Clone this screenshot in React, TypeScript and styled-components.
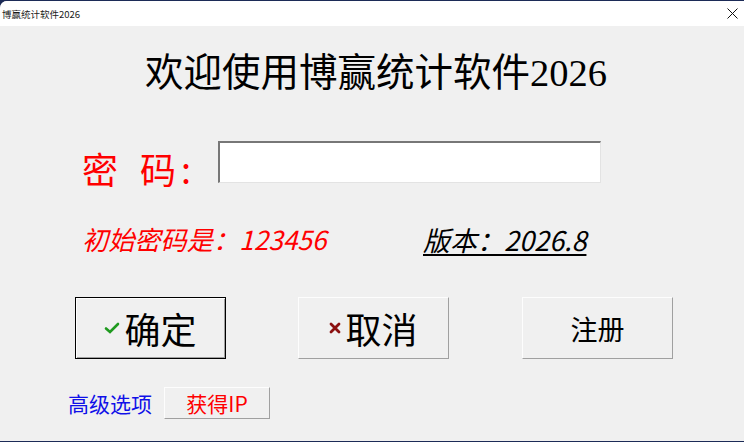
import styled, { createGlobalStyle } from "styled-components";

const GlobalStyle = createGlobalStyle`
  html, body {
    margin: 0;
    padding: 0;
    background: #1c2b57;
  }
  * {
    box-sizing: border-box;
  }
`;

const CN = `"Noto Sans CJK SC", "Noto Sans", sans-serif`;

const Window = styled.div`
  width: 744px;
  height: 440px;
  margin-top: 1px;
  border-radius: 7px 0 0 0;
  overflow: hidden;
  background: #f0f0f0;
  display: flex;
  flex-direction: column;
`;

const TitleBar = styled.div`
  height: 25px;
  background: #ffffff;
  display: flex;
  align-items: center;
  justify-content: space-between;
  padding: 0 4px 0 2px;
`;

const TitleText = styled.span`
  font-family: ${CN};
  font-size: 9.5px;
  color: #1a1a1a;
`;

const CloseBox = styled.div`
  width: 16px;
  height: 16px;
  display: flex;
  align-items: center;
  justify-content: center;
`;

const Body = styled.div`
  flex: 1;
  display: flex;
  flex-direction: column;
`;

const Heading = styled.h1`
  margin: 22px 0 0;
  height: 50px;
  line-height: 50px;
  text-align: center;
  font-family: "Liberation Serif", "Noto Sans CJK SC", serif;
  font-size: 38.5px;
  font-weight: 400;
  color: #000;
  padding-left: 8px;
`;

const PasswordRow = styled.div`
  margin-top: 43px;
  display: flex;
  align-items: center;
  padding-left: 82px;
  height: 42px;
`;

const Label = styled.span`
  font-family: ${CN};
  font-size: 36px;
  color: #ff0000;
  width: 136px;
  line-height: 42px;
  padding-top: 11px;
  display: flex;
`;

const LabelChar = styled.span<{ $gap: number }>`
  margin-right: ${(p) => p.$gap}px;
`;

const Input = styled.input`
  width: 383px;
  height: 42px;
  background: #ffffff;
  border-top: 2px solid #777;
  border-left: 2px solid #777;
  border-right: 1px solid #e3e3e3;
  border-bottom: 1px solid #e3e3e3;
  outline: none;
  padding: 0 6px;
  font-size: 20px;
`;

const HintRow = styled.div`
  margin-top: 40px;
  display: flex;
  align-items: center;
  padding-left: 82px;
  height: 32px;
`;

const Hint = styled.span<{ $tone: "red" | "black"; $under?: boolean; $w?: number; $size: number }>`
  font-family: ${CN};
  font-style: italic;
  font-size: ${(p) => p.$size}px;
  color: ${(p) => (p.$tone === "red" ? "#ff0000" : "#000")};
  text-decoration: ${(p) => (p.$under ? "underline" : "none")};
  text-underline-offset: 3px;
  text-decoration-thickness: 2px;
  width: ${(p) => (p.$w ? `${p.$w}px` : "auto")};
`;

const ButtonRow = styled.div`
  margin-top: 42px;
  display: flex;
  gap: 72px;
  padding-left: 75px;
`;

const Button = styled.button<{ $default?: boolean; $size?: number }>`
  width: 151px;
  height: 62px;
  background: #f0f0f0;
  border: 1px solid;
  border-color: ${(p) =>
    p.$default ? "#000 #000 #000 #000" : "#fdfdfd #a0a0a0 #a0a0a0 #fdfdfd"};
  box-shadow: ${(p) =>
    p.$default ? "inset 1px 1px 0 #fff, inset -1px -1px 0 #a0a0a0" : "none"};
  font-family: ${CN};
  font-size: ${(p) => p.$size ?? 36}px;
  color: #000;
  display: flex;
  align-items: center;
  justify-content: center;
  gap: 4px;
  padding: 0;
  cursor: pointer;
  &:last-child {
    margin-left: 1px;
  }
`;

const ButtonText = styled.span`
  line-height: 1;
`;

const BottomRow = styled.div`
  margin-top: 28px;
  display: flex;
  align-items: center;
  padding-left: 68px;
  gap: 12px;
`;

const Advanced = styled.span`
  font-family: ${CN};
  font-size: 21px;
  color: #1010e8;
`;

const SmallButton = styled.button`
  width: 106px;
  height: 32px;
  background: #f0f0f0;
  border: 1px solid;
  border-color: #fdfdfd #a0a0a0 #a0a0a0 #fdfdfd;
  font-family: ${CN};
  font-size: 21px;
  color: #ff0000;
  padding: 0;
  line-height: 1;
`;

const CheckIcon = () => (
  <svg width="16" height="12" viewBox="0 0 16 12">
    <path d="M2 6.5 L6 10 L14 2" fill="none" stroke="#1f9a1f" strokeWidth="2.6" strokeLinecap="round" />
  </svg>
);

const CrossIcon = () => (
  <svg width="12" height="12" viewBox="0 0 12 12">
    <path d="M2 2 L10 10 M10 2 L2 10" stroke="#8b1010" strokeWidth="2.8" strokeLinecap="round" />
  </svg>
);

export default function App() {
  return (
    <>
      <GlobalStyle />
      <Window>
        <TitleBar>
          <TitleText>博赢统计软件2026</TitleText>
          <CloseBox>
            <svg width="11" height="11" viewBox="0 0 11 11">
              <path d="M0.5 0.5 L10.5 10.5 M10.5 0.5 L0.5 10.5" stroke="#111" strokeWidth="1" />
            </svg>
          </CloseBox>
        </TitleBar>
        <Body>
          <Heading>欢迎使用博赢统计软件2026</Heading>
          <PasswordRow>
            <Label>
              <LabelChar $gap={22}>密</LabelChar>
              <LabelChar $gap={5}>码</LabelChar>
              <span>:</span>
            </Label>
            <Input type="password" />
          </PasswordRow>
          <HintRow>
            <Hint $tone="red" $size={26.2} $w={341}>初始密码是：123456</Hint>
            <Hint $tone="black" $size={27} $under>版本：2026.8</Hint>
          </HintRow>
          <ButtonRow>
            <Button $default>
              <CheckIcon />
              <ButtonText>确定</ButtonText>
            </Button>
            <Button>
              <CrossIcon />
              <ButtonText>取消</ButtonText>
            </Button>
            <Button $size={27}>
              <ButtonText>注册</ButtonText>
            </Button>
          </ButtonRow>
          <BottomRow>
            <Advanced>高级选项</Advanced>
            <SmallButton>获得IP</SmallButton>
          </BottomRow>
        </Body>
      </Window>
    </>
  );
}
